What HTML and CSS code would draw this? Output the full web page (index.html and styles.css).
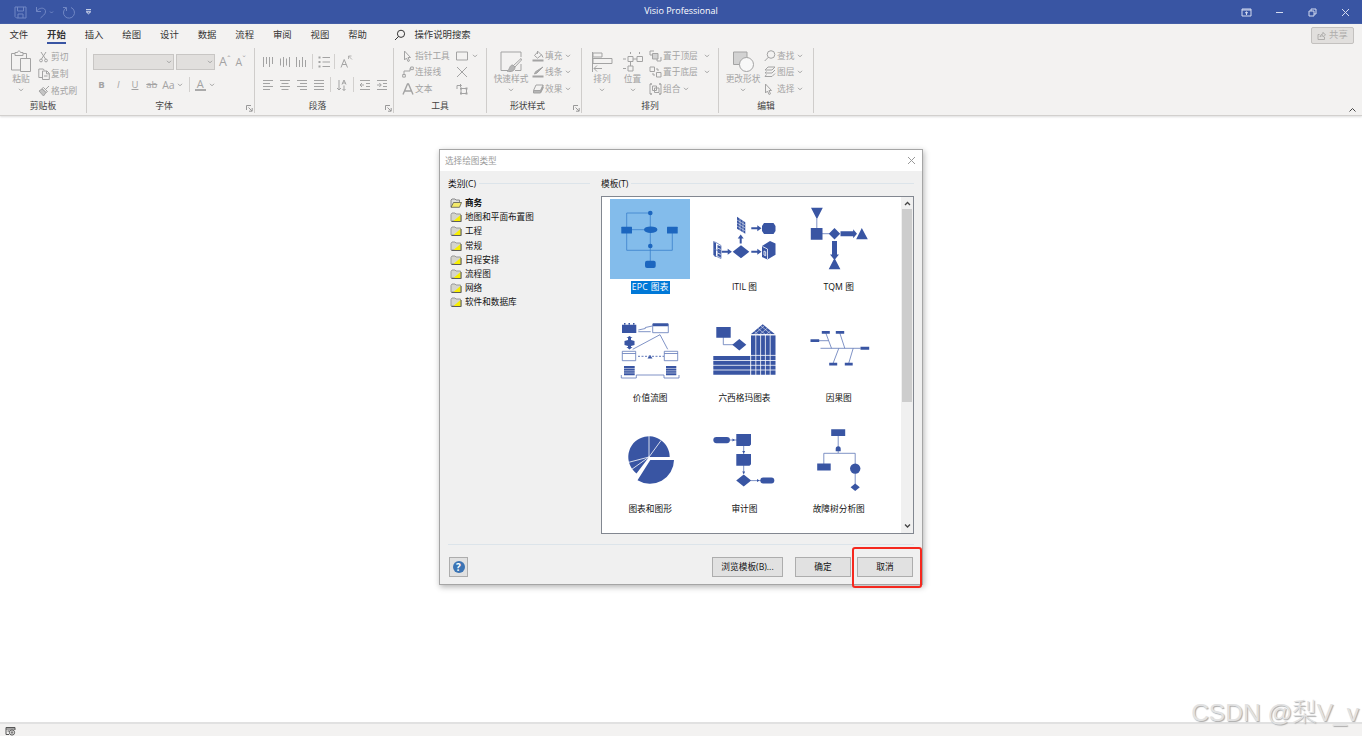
FILE: index.html
```html
<!DOCTYPE html>
<html lang="zh-CN">
<head>
    <meta charset="utf-8">
    <title>Visio Professional</title>
    <link rel="stylesheet" href="styles.css">
</head>

<body>
    <svg class="defs">
        <symbol id="chev" viewBox="0 0 6 4"><path d="M1 .8l2 2 2-2"/></symbol>
        <symbol id="launcher" viewBox="0 0 7 7"><path d="M.5 5V.5H5M2.500 2.500l3.500 3.500M6.200 3v3.200H3"/></symbol>
        <symbol id="folder" viewBox="0 0 12 10">
            <path d="M1 9V2.500l1-1.500h3l1 1h4.500V9z" fill="#d4d4cc" stroke="#999"/>
            <path d="M3.500 9L10.500 3v6z" fill="#f7ee00" stroke="none"/><path d="M1.500 9.500h9.700V3" fill="none" stroke="#444" stroke-width=".8"/>
        </symbol>
    </svg>

    <div class="titlebar">
        <div class="quick">
            <svg width="13" height="13" viewBox="0 0 13 13"><path d="M1 1h11v11H2.500L1 10.500zM3.500 1v4h6V1M4 12V8h5v4"/></svg>
            <svg width="19" height="13" viewBox="0 0 19 13"><path d="M1.500 1v4.500H6M1.500 5.500C4 1 11 1 10.500 6c-.3 2.500-3 4-5 6M15 5.500l1.500 1.500L18 5.500"/></svg>
            <svg width="13" height="13" viewBox="0 0 13 13"><path d="M1 1.500h3.500V5M9 1.500a5.500 5.500 0 1 1-5 .5"/></svg>
            <svg class="bright" width="7" height="6" viewBox="0 0 7 6"><path d="M1 .7h5M1.300 2.800l2.200 2 2.200-2z"/></svg>
        </div>
        <div class="app-name">Visio Professional</div>
        <div class="win-buttons">
            <svg width="11" height="9" viewBox="0 0 11 9"><path d="M1 1h9v7H1zM1 2h9M5.500 7V4M4 5.200l1.500-1.400L7 5.200"/></svg>
            <svg width="9" height="9" viewBox="0 0 9 9"><path d="M1 4.500h7"/></svg>
            <svg width="9" height="9" viewBox="0 0 9 9"><path d="M1 3h5v5H1zM3 3V1h5v5H6"/></svg>
            <svg width="9" height="9" viewBox="0 0 9 9"><path d="M1 1l7 7M8 1L1 8"/></svg>
        </div>
    </div>

    <div class="ribbon">
        <div class="tabs">
            <span>文件</span><span class="active">开始</span><span>插入</span><span>绘图</span><span>设计</span><span>数据</span><span>流程</span><span>审阅</span><span>视图</span><span>帮助</span>
            <svg width="12" height="12" viewBox="0 0 12 12"><circle cx="7" cy="4.800" r="3.600"/><path d="M4.500 7.500L1 11"/></svg>
            <span class="search">操作说明搜索</span>
            <button class="share"><svg width="9" height="9" viewBox="0 0 9 9"><path d="M2.500 3.500H1v5h6.500V6M3 6c.3-2 1.500-3 3-3V1.300L8.500 4 6 6V4.500C5 4.500 4 5 3 6z"/></svg>共享</button>
        </div>

        <div class="groups">
            <!-- 剪贴板 -->
            <div class="group clipboard">
                <div class="tools">
                    <div class="big">
                        <svg width="22" height="23" viewBox="0 0 22 23"><path d="M5 3.500H1.500V20H10M13 3.500h3.500V8M5 2.500h2.500c0-2 3-2 3 0H13v3H5zM10.500 8.500h10v13h-10z"/></svg>
                        粘贴
                        <svg class="chev"><use href="#chev"/></svg>
                    </div>
                    <div class="col">
                        <div><svg width="12" height="12" viewBox="0 0 12 12"><path d="M3 1l4.500 7M8 1L3.500 8"/><circle cx="3" cy="9.500" r="1.400"/><circle cx="8" cy="9.500" r="1.400"/></svg>剪切</div>
                        <div><svg width="12" height="12" viewBox="0 0 12 12"><path d="M4 9.500H.8V1H5l1.500 1M4.500 3H9l2.300 2.300v6.200H4.500zM8.500 3v2.800h2.800M6 8h3.500"/></svg>复制</div>
                        <div><svg width="12" height="12" viewBox="0 0 12 12"><path d="M11 1L7.500 4.500M5.500 2.500l4 4-1.500 1-4-4z"/><path d="M4 4L1 6l4.500 5L8 7.500z" fill="#c4c4c4"/></svg>格式刷</div>
                    </div>
                </div>
                <div class="name">剪贴板</div>
            </div>

            <!-- 字体 -->
            <div class="group font">
                <div class="tools rows">
                    <div class="row">
                        <div class="combo wide"><svg class="chev"><use href="#chev"/></svg></div>
                        <div class="combo"><svg class="chev"><use href="#chev"/></svg></div>
                        <span class="grow">A<small>ˆ</small></span>
                        <span class="shrink">A<small>ˇ</small></span>
                    </div>
                    <div class="row second">
                        <b class="ch">B</b><i class="ch">I</i><u class="ch">U</u><s class="ch">ab</s>
                        <span class="case">Aa</span><svg class="chev"><use href="#chev"/></svg>
                        <span class="sep"></span>
                        <span class="color">A</span><svg class="chev"><use href="#chev"/></svg>
                    </div>
                </div>
                <div class="name more">字体<svg class="launch"><use href="#launcher"/></svg></div>
            </div>

            <!-- 段落 -->
            <div class="group para">
                <div class="tools rows">
                    <div class="row">
                        <svg width="12" height="12" viewBox="0 0 12 12"><path d="M1.500 1v10M4.500 1v7M7.500 1v10M10.500 1v7"/></svg>
                        <svg width="12" height="12" viewBox="0 0 12 12"><path d="M1.500 2.500v7M4.500 1v10M7.500 2.500v7M10.500 1v10"/></svg>
                        <svg width="12" height="12" viewBox="0 0 12 12"><path d="M1.500 1v10M4.500 4v7M7.500 1v10M10.500 4v7"/></svg>
                        <span class="sep"></span>
                        <svg width="12" height="12" viewBox="0 0 12 12"><path d="M4.500 1.500H12M4.500 6H12M4.500 10.500H12"/><path d="M.5 1.500h2M.5 6h2M.5 10.500h2" stroke-width="2"/></svg>
                        <span class="sep"></span>
                        <svg width="13" height="13" viewBox="0 0 13 13"><path d="M1 12.500L4.200 4.500 7.500 12.500M2.200 9.500h4"/><path d="M8.500 4V1h3M8.500 1l3.500 3.500" stroke-width=".8"/></svg>
                    </div>
                    <div class="row second">
                        <svg width="12" height="12" viewBox="0 0 12 12"><path d="M1 1.500h10M1 4.500h7M1 7.500h10M1 10.500h7"/></svg>
                        <svg width="12" height="12" viewBox="0 0 12 12"><path d="M1 1.500h10M2.500 4.500h7M1 7.500h10M2.500 10.500h7"/></svg>
                        <svg width="12" height="12" viewBox="0 0 12 12"><path d="M1 1.500h10M4 4.500h7M1 7.500h10M4 10.500h7"/></svg>
                        <svg width="12" height="12" viewBox="0 0 12 12"><path d="M1 1.500h10M1 4.500h10M1 7.500h10M1 10.500h10"/></svg>
                        <span class="sep"></span>
                        <svg width="12" height="12" viewBox="0 0 12 12"><path d="M3 1v10M1 9l2 2 2-2M8 6.500v5M6.500 10L8 11.500 9.500 10M6 5.500L8 1l2 4.500M6.700 4h2.600"/></svg>
                        <span class="sep"></span>
                        <svg width="12" height="12" viewBox="0 0 12 12"><path d="M1 1.500h10M7 4.500h4M7 7.500h4M1 10.500h10M1 6h4M3 4L1 6l2 2"/></svg>
                        <svg width="12" height="12" viewBox="0 0 12 12"><path d="M1 1.500h10M7 4.500h4M7 7.500h4M1 10.500h10M1 6h4M3.300 4l2 2-2 2"/></svg>
                    </div>
                </div>
                <div class="name more">段落<svg class="launch"><use href="#launcher"/></svg></div>
            </div>

            <!-- 工具 -->
            <div class="group tool">
                <div class="tools">
                    <div class="col">
                        <div><svg width="12" height="12" viewBox="0 0 12 12"><path d="M2.500 1v9l2-2 1.500 3.500 1.500-.7L6 7.500h2.500z"/></svg>指针工具</div>
                        <div><svg width="12" height="12" viewBox="0 0 12 12"><path d="M.7 8.500h2.600v2.600H.7zM8.700 1h2.600v2.600H8.700zM2 8.500V5h6V2.300h.7"/></svg>连接线</div>
                        <div><svg width="12" height="12" viewBox="0 0 12 12"><path d="M1 11.500L5.500 1h1L11 11.500M2.800 8h6.400" stroke-width="1.400"/></svg>文本</div>
                    </div>
                    <div class="col second">
                        <div><svg width="12" height="12" viewBox="0 0 12 12"><path d="M.5 2h11v8H.5z"/></svg><svg class="chev"><use href="#chev"/></svg></div>
                        <div><svg width="12" height="12" viewBox="0 0 12 12"><path d="M1 1l10 10M11 1L1 11"/></svg></div>
                        <div><svg width="12" height="12" viewBox="0 0 12 12"><path d="M1 6V2.500h4M4 1l1.500 1.500L4 4M5 5.500h5.500v5H5z"/><path d="M4 5.500h2M9.500 5.500h2M4 10.500h2M9.500 10.500h2" stroke-width="2"/></svg></div>
                    </div>
                </div>
                <div class="name">工具</div>
            </div>

            <!-- 形状样式 -->
            <div class="group style">
                <div class="tools">
                    <div class="big">
                        <svg width="22" height="23" viewBox="0 0 22 23"><path d="M8 20.500H1V2h20v5M21 14v6.500h-6M21 8.500L13 16l1.500 1.500L21.500 10z"/><path d="M13 15c-4 0-3 5-6 6 4 1.500 8 0 8-4z" fill="#b5b5b5"/></svg>
                        快速样式
                        <svg class="chev"><use href="#chev"/></svg>
                    </div>
                    <div class="col">
                        <div><svg width="12" height="12" viewBox="0 0 12 12"><path d="M6 1.500L2.500 5.500l3 2.700L9.500 5zM5.500 1v3M9.500 4.500l1.500 3"/><path d="M.5 10.500h11" stroke-width="2"/></svg>填充<svg class="chev"><use href="#chev"/></svg></div>
                        <div><svg width="12" height="12" viewBox="0 0 12 12"><path d="M11 1L5 7 2.500 8l1-2.300z" fill="#aaa"/><path d="M.5 10.500h11" stroke-width="2"/></svg>线条<svg class="chev"><use href="#chev"/></svg></div>
                        <div><svg width="12" height="12" viewBox="0 0 12 12"><path d="M4 2h7L8.500 7.500h-7zM1.500 7.500v2.500h7l2.500-5V2"/><path d="M1.500 9h7L11 4" stroke-width="1.600"/></svg>效果<svg class="chev"><use href="#chev"/></svg></div>
                    </div>
                </div>
                <div class="name more">形状样式<svg class="launch"><use href="#launcher"/></svg></div>
            </div>

            <!-- 排列 -->
            <div class="group arrange">
                <div class="tools">
                    <div class="big">
                        <svg width="22" height="23" viewBox="0 0 22 23"><path d="M1.500 2v20M2 3h9v4H2zM2 8.500h19v5H2zM3 18.500h8M6 15.500l-3 3 3 3"/></svg>
                        排列
                        <svg class="chev"><use href="#chev"/></svg>
                    </div>
                    <div class="big">
                        <svg width="22" height="23" viewBox="0 0 22 23"><path d="M6 6.500h5v5H6zM15 6.500h5.500v5H15zM6 16h5v5H6zM11 9h4M8.500 11.500V16M8.500 2v2M17.500 2v2M1 9h3M1 18.500h3"/></svg>
                        位置
                        <svg class="chev"><use href="#chev"/></svg>
                    </div>
                    <div class="col">
                        <div><svg width="13" height="12" viewBox="0 0 13 12"><path d="M5 1H1v4h2M12 7v4H8V9"/><path d="M3.500 3.500h5.500v5.500H3.500z" fill="#d2d2d2"/></svg>置于顶层<svg class="chev far"><use href="#chev"/></svg></div>
                        <div><svg width="13" height="12" viewBox="0 0 13 12"><path d="M1 1h4.500v4.500H1zM7.500 6.500H12V11H7.500zM7 3h2v2M4 7v2h2"/></svg>置于底层<svg class="chev far"><use href="#chev"/></svg></div>
                        <div><svg width="13" height="12" viewBox="0 0 13 12"><path d="M3.500 3h4v4.500h-4zM5.500 5h4.500v4.500H5.500zM1 1v10M12 1v10" /><path d="M1 1h2M10 1h2M1 11h2M10 11h2" stroke-width="1.500"/></svg>组合<svg class="chev"><use href="#chev"/></svg></div>
                    </div>
                </div>
                <div class="name">排列</div>
            </div>

            <!-- 编辑 -->
            <div class="group edit">
                <div class="tools">
                    <div class="big">
                        <svg width="22" height="23" viewBox="0 0 22 23"><path d="M1.500 2H15v12.500H1.500z" fill="#d2d2d2"/><circle cx="14.500" cy="14.500" r="7" fill="#f8f8f8"/></svg>
                        更改形状
                        <svg class="chev"><use href="#chev"/></svg>
                    </div>
                    <div class="col">
                        <div><svg width="12" height="12" viewBox="0 0 12 12"><circle cx="7" cy="4.500" r="3.800"/><path d="M4.300 7.300L.7 11"/></svg>查找<svg class="chev"><use href="#chev"/></svg></div>
                        <div><svg width="12" height="12" viewBox="0 0 12 12"><path d="M4 1h7L8 4H1zM2.500 5.500L1 7h7l3-3M2.500 8.500L1 10.500h7l3-3"/></svg>图层<svg class="chev"><use href="#chev"/></svg></div>
                        <div><svg width="12" height="12" viewBox="0 0 12 12"><path d="M1.500 1v9l2-2L5 11.500l1.500-.7L5 7.500h2.500z"/></svg>选择<svg class="chev"><use href="#chev"/></svg></div>
                    </div>
                </div>
                <div class="name">编辑</div>
            </div>

            <svg class="collapse" width="9" height="6" viewBox="0 0 9 6"><path d="M1.500 4.500l3-3 3 3"/></svg>
        </div>
    </div>

    <div class="workspace">
        <div class="dialog">
            <div class="dialog-title">选择绘图类型
                <svg width="9" height="9" viewBox="0 0 9 9"><path d="M1 1l7 7M8 1L1 8"/></svg>
            </div>
            <div class="dialog-main">
                <div class="categories">
                    <div class="legend">类别(C)</div>
                    <ul>
                        <li class="open"><svg width="12" height="10" viewBox="0 0 12 10"><path d="M1 9V2l1-1h3l1 1h3.500v2" fill="#ddd" stroke="#888"/><path d="M1 9.300L3.500 4.500H11.500L9.500 9.300z" fill="#f3e96b" stroke="#444" stroke-width=".7"/></svg>商务</li>
                        <li><svg width="12" height="10"><use href="#folder"/></svg>地图和平面布置图</li>
                        <li><svg width="12" height="10"><use href="#folder"/></svg>工程</li>
                        <li><svg width="12" height="10"><use href="#folder"/></svg>常规</li>
                        <li><svg width="12" height="10"><use href="#folder"/></svg>日程安排</li>
                        <li><svg width="12" height="10"><use href="#folder"/></svg>流程图</li>
                        <li><svg width="12" height="10"><use href="#folder"/></svg>网络</li>
                        <li><svg width="12" height="10"><use href="#folder"/></svg>软件和数据库</li>
                    </ul>
                </div>
                <div class="templates">
                    <div class="legend">模板(T)</div>
                    <div class="listbox">
                        <div class="tiles">
                            <div class="tile selected">
                                <svg viewBox="0 0 80 80">
                                    <path class="ln" d="M40.300 14H16.700v37.300h45.600V34M40.300 14v48M20 30.700h16"/>
                                    <circle cx="40.300" cy="14" r="2.300"/><circle cx="40.300" cy="47" r="2.300"/><ellipse cx="40.700" cy="30.700" rx="6.700" ry="3.300"/>
                                    <rect x="11.300" y="27.700" width="10.700" height="6.800" rx=".5"/><rect x="57" y="27.700" width="10.700" height="6.800" rx=".5"/><rect x="35" y="61.700" width="10.700" height="7.300" rx="2"/>
                                </svg>
                                <span>EPC 图表</span>
                            </div>
                            <div class="tile">
                                <svg viewBox="0 0 80 80">
                                    <path d="M33 17.700l8.300 5.600v11.500L33 29.700zM47.300 28.300h6v-2l4.200 3-4.200 3v-2h-6zM60 24h9.500l2 3v5l-2 3H60l-2-3v-5zM35.700 44.500v-5h-2l3-4 3 4h-2v5zM37 46.300l8.300 6.500L37 59.300l-8.300-6.500zM17.700 51.800h6v-2l4.200 3-4.200 3v-2h-6zM47.300 51.800h6v-2l4.200 3-4.200 3v-2h-6z"/>
                                    <path d="M58 47l8-5 5.500 2.500v11.200L63.500 60.500 58 58zM10 43l2 1v14l-2-1zM13.500 46l3.500 1.500v11L13.500 57z"/>
                                    <path class="gap thin" d="M33 21l8.300 5M33 24l8.300 5M33 27l8.300 5M36 19v14M39 20v14"/>
                                    <path class="gap" d="M58.500 47.500l5 2.500v10M60 52v4l1.700.8v-4zM13.500 49l3.500 1.500M13.500 54l3.500 1.500"/>
                                    <path class="ln" d="M9.500 42.500l2.500 1 5 3v13l-7.500-3.500zM10 50l7 3"/>
                                </svg>
                                <span>ITIL 图</span>
                            </div>
                            <div class="tile">
                                <svg viewBox="0 0 80 80">
                                    <path class="ln" d="M17.800 20v10M23 34.700h8"/>
                                    <path d="M12 8.700h11.800l-5.900 11.600zM11.800 29h11.700v11.700H11.800zM35.500 29l5.700 5.700-5.700 5.700-5.700-5.700zM41.500 32.200h12.700v-2l3.800 4.500-3.800 4.500v-2H41.500zM62.800 29l6 11.200H57.200zM33 42h5v13.500h2L35.500 61 31 55.500h2zM35.500 59l5.900 11.300H29.700z"/>
                                </svg>
                                <span>TQM 图</span>
                            </div>
                            <div class="tile">
                                <svg viewBox="0 0 80 80">
                                    <path d="M12 14.700h14.300V23H12zM14 13h1.500v1.500H14zM18.500 13H20v1.500h-1.500zM23 13h1.500v1.500H23zM42.700 13.300h15.600v3H42.700zM14.500 31l3.500-1v-2h-1.500l3-2 3 2H21v2l3.500 1v4L21 36v1h1.500l-3 2.500-3-2.500H18v-1l-3.500-1zM40 44.700l2.500 3.800h-5zM14 56h10.700v9.300H14zM56 56h10.300v9.300H56z"/>
                                    <path class="ln" d="M42.700 14v8.700h15.600V14M28.300 20l7-1.500v-1l7-1.500M28.300 21.700h12.400M22.700 39.300L50 24.700l7.700 14.600M12.300 41.300h13.400v9.400H12.300zM12.300 43.500h13.400M54.300 41.300h13.400v9.400H54.300zM54.300 43.500h13.400M11.300 65v3h15v-3H54v3h15v-3"/>
                                    <path class="ln dash" d="M28 46.300h26"/>
                                    <path class="gap thin" d="M14 58.500h11M14 60.800h11M14 63h11M56 58.500h11M56 60.800h11M56 63h11"/>
                                </svg>
                                <span>价值流图</span>
                            </div>
                            <div class="tile">
                                <svg viewBox="0 0 80 80">
                                    <path class="ln" d="M19.300 27v7.700H30"/>
                                    <path d="M12.300 17h14.400v10.700H12.300zM35.300 29l7 5.700-7 5.700-7-5.700zM58.700 14.300l12.300 10H46.700zM47 25.300h24.500v39.400H47zM9.300 46h37.400v18.700H9.300z"/>
                                    <path class="gap" d="M51.800 25v40M56.600 25v40M61.400 25v40M66.200 25v40M47 45.400h25M9 50.500h63M9 55.300h63M9 60h63M46.700 45v20M47 24.800h25"/>
                                    <path class="gap thin" d="M50.500 21.500l5 4M54 18.500l8 6.500M57 16l11 9M66.500 21l-5 4M63.500 18l-8.500 7M60 16l-10.500 9"/>
                                </svg>
                                <span>六西格玛图表</span>
                            </div>
                            <div class="tile">
                                <svg viewBox="0 0 80 80">
                                    <path class="ln" d="M21.500 38.300h40M20 30.700h9.500M26.800 23l5.700 15.300M40.800 23l5 15.300M39.800 38.300L34.200 53M54.200 38.300L49.800 53"/>
                                    <path d="M61.500 36.800h8.700v3h-8.700zM22.800 21h8v2.700h-8zM36.800 21h8.400v2.700h-8.400zM11.500 29.200h8.700V32h-8.700zM30.200 52.700h8v2.700h-8zM45.800 52.700h7.900v2.700h-7.900z"/>
                                </svg>
                                <span>因果图</span>
                            </div>
                            <div class="tile">
                                <svg viewBox="0 0 80 80">
                                    <path d="M39 37h20.700A20.700 20.700 0 1 0 26.500 53.500zM40.300 40H64A24 24 0 0 1 27.500 60.300z"/>
                                    <path class="gap" d="M39 37V16M39 37l12-16.500M39 37l-21 5.500M39 37L21.500 49.500"/>
                                </svg>
                                <span>图表和图形</span>
                            </div>
                            <div class="tile">
                                <svg viewBox="0 0 80 80">
                                    <path class="ln" d="M26 20h7M39.700 26v28M47 60.600h10"/>
                                    <rect x="9.300" y="17" width="16.700" height="6.200" rx="3.100"/><rect x="56.300" y="57.600" width="14" height="5.800" rx="2.900"/>
                                    <path d="M32.300 14H47v10.500L45.500 26H32.300zM32.300 34H47v10.300l-1.500 1.500H32.300zM39.700 54.500l7.500 6-7.500 6-7.500-6zM28.500 18.500l2.500 1.500-2.500 1.500zM38.200 31h3l-1.500 2.500zM38.200 51.500h3L39.700 54zM53 59l2.500 1.600L53 62z"/>
                                </svg>
                                <span>审计图</span>
                            </div>
                            <div class="tile">
                                <svg viewBox="0 0 80 80">
                                    <path class="ln" d="M39.200 15v18M24.800 44V33.300h31.400V65"/>
                                    <path d="M32.200 9.300h14V16h-14zM36.700 31.300v-2.500a2.500 2.500 0 0 1 5 0v2.500zM18.200 43.600h13.500v7H18.200zM56.200 63.600l4.600 3.700-4.600 3.700-4.600-3.700z"/>
                                    <circle cx="56.200" cy="48.600" r="5.200"/>
                                </svg>
                                <span>故障树分析图</span>
                            </div>
                        </div>
                        <div class="scrollbar">
                            <svg width="9" height="6" viewBox="0 0 9 6"><path d="M2 4l2.500-2.500L7 4"/></svg>
                            <div class="thumb"></div>
                            <svg width="9" height="6" viewBox="0 0 9 6"><path d="M2 1.500L4.500 4 7 1.500"/></svg>
                        </div>
                    </div>
                </div>
            </div>
            <div class="dialog-footer">
                <button class="help"><i>?</i></button>
                <button class="browse">浏览模板(B)...</button>
                <button class="ok">确定</button>
                <button class="cancel">取消<span class="highlight"></span></button>
            </div>
        </div>
    </div>

    <div class="statusbar">
        <svg width="11" height="10" viewBox="0 0 11 10"><path d="M1 8.500v-7h9V4M1 3h9M1 8.500h3M2.500 5h2"/><circle cx="7" cy="6.500" r="2.600"/><circle cx="7" cy="6.500" r=".8"/></svg>
    </div>
    <div class="watermark">CSDN @梨V_v</div>
</body>
</html>
```

FILE: styles.css
```css
* {
    box-sizing: border-box;
}

body {
    margin: 0;
    width: 1362px;
    height: 736px;
    overflow: hidden;
    display: flex;
    flex-direction: column;
    background: #fff;
    font-family: "Open Sans", "Noto Sans CJK SC", sans-serif;
    font-size: 8.7px;
    line-height: 12px;
    color: #222;
}

svg {
    fill: none;
    stroke: currentColor;
    flex: none;
}

.defs {
    position: absolute;
    width: 0;
    height: 0;
}

button {
    font: inherit;
    color: inherit;
    padding: 0;
}

/* title bar */
.titlebar {
    height: 24px;
    background: #3955a3;
    color: #fff;
    display: grid;
    grid-template-columns: 1fr auto 1fr;
    align-items: center;
}

.quick {
    display: flex;
    align-items: center;
    padding-left: 14px;
    gap: 8px;
    color: #7187c4;
}

.quick .bright {
    color: #e4e9f6;
    margin-left: 2px;
}

.app-name {
    font-size: 9px;
    padding-bottom: 3px;
}

.win-buttons {
    display: flex;
    justify-content: flex-end;
    gap: 24px;
    padding-right: 12px;
    color: #d5dcf0;
}

.win-buttons svg:first-child {
    margin-right: -1px;
}

/* ribbon */
.ribbon {
    height: 92px;
    background: #f3f2f1;
    border-bottom: 1px solid #d2d0ce;
    box-shadow: 0 1px 2px #ddd;
}

.tabs {
    height: 22px;
    display: flex;
    align-items: center;
    font-size: 9.4px;
    color: #333;
}

.tabs > span {
    width: 37.65px;
    height: 20px;
    line-height: 19px;
    text-align: center;
}

.tabs .active {
    font-weight: bold;
    display: flex;
    flex-direction: column;
    align-items: center;
}

.tabs .active::after {
    content: "";
    width: 19px;
    height: 2px;
    flex: none;
    margin-top: -2px;
    background: #3955a3;
}

.tabs > svg {
    margin-left: 18px;
    margin-right: 8px;
}

.tabs .search {
    width: 60px;
    text-align: left;
}

.share {
    margin-left: auto;
    margin-right: 8px;
    width: 43px;
    height: 17px;
    display: flex;
    align-items: center;
    justify-content: center;
    gap: 3px;
    background: #e1dfdd;
    border: 1px solid #c3c1bf;
    border-radius: 2px;
    color: #b0aeac;
}

.groups {
    display: flex;
    height: 69px;
    color: #a3a3a3;
}

.group {
    height: 65px;
    margin-top: 2px;
    border-right: 1px solid #cfcdcb;
    display: flex;
    flex-direction: column;
}

.tools {
    height: 53px;
    display: flex;
}

.name {
    position: relative;
    text-align: center;
    color: #444;
    font-size: 8.8px;
    line-height: 13px;
}

.more {
    padding-right: 13px;
}

.launch {
    position: absolute;
    right: 1px;
    top: 5px;
    width: 7px;
    height: 7px;
    color: #999;
}

.chev {
    width: 6px;
    height: 4px;
}

.big {
    width: 36px;
    display: flex;
    flex-direction: column;
    align-items: center;
    padding-top: 2px;
    white-space: nowrap;
}

.big .chev {
    margin-top: 3px;
}

.col {
    display: flex;
    flex-direction: column;
}

.col > div {
    height: 16.3px;
    display: flex;
    align-items: center;
    white-space: nowrap;
}

.col svg:first-child {
    margin-right: 1px;
}

.col .chev {
    margin-left: 3px;
}

.clipboard {
    width: 87px;
}

.clipboard .big {
    margin-left: 3px;
    margin-right: -1px;
}

.clipboard .col > div {
    height: 17px;
}

.rows {
    flex-direction: column;
}

.row {
    display: flex;
    align-items: center;
    height: 17px;
    margin-top: 5px;
}

.sep {
    width: 1px;
    height: 15px;
    background: #d2d0ce;
}

.font {
    width: 168px;
}

.font .row {
    padding-left: 6px;
}

.combo {
    width: 39px;
    height: 16px;
    margin-left: 2px;
    background: #e1dfdd;
    border: 1px solid #c8c6c4;
    display: flex;
    align-items: center;
    justify-content: flex-end;
    padding-right: 1px;
}

.combo.wide {
    width: 81px;
    margin-left: 0;
}

.grow,
.shrink {
    display: flex;
    font-size: 12.5px;
    margin-left: 4px;
}

.shrink {
    font-size: 10.5px;
    margin-left: 5px;
}

.grow small,
.shrink small {
    font-size: 9px;
    line-height: 8px;
}

.font .second,
.para .second {
    margin-top: 6px;
}

.ch {
    width: 16.8px;
    text-align: center;
    font-size: 9.5px;
}

.case {
    margin-left: 2px;
    margin-right: 2px;
    font-size: 10.5px;
}

.font .sep {
    margin: 0 5px 0 6px;
}

.color {
    width: 11px;
    height: 13px;
    margin-right: 3px;
    border-bottom: 2px solid #aaa;
    text-align: center;
    font-size: 11px;
    line-height: 11px;
}

.para {
    width: 139px;
}

.para .row {
    gap: 5px;
    padding-left: 7px;
}

.para .row:first-child {
    gap: 4.700px;
}

.tool {
    width: 93px;
}

.tool .col {
    width: 55px;
    padding-left: 8px;
}

.tool .second {
    padding-left: 7px;
    width: 35px;
}

.style {
    width: 95px;
}

.style .big {
    margin-left: 6px;
    margin-right: 3px;
}

.arrange {
    width: 137px;
}

.arrange .big {
    width: 30px;
    margin-left: 5px;
    margin-right: -4.5px;
}

.arrange .col {
    padding-left: 6px;
}

.arrange .far {
    margin-left: 6px;
}

.edit {
    width: 95px;
}

.edit .big {
    margin-left: 6px;
    margin-right: 3px;
}

.collapse {
    margin-left: auto;
    margin-right: 5px;
    align-self: flex-end;
    margin-bottom: 2px;
    color: #444;
}

/* drawing area with the template dialog */
.workspace {
    flex: 1;
    padding: 33px 0 0 439px;
}

.dialog {
    width: 484px;
    height: 436px;
    background: #f0f0f0;
    border: 1px solid #a5a5a5;
    box-shadow: 1px 2px 6px rgba(0, 0, 0, .3);
    color: #111;
}

.dialog-title {
    height: 21px;
    padding: 0 6px 0 5px;
    background: #fff;
    color: #999;
    font-size: 8.6px;
    display: flex;
    align-items: center;
    justify-content: space-between;
}

.dialog-main {
    height: 374px;
    margin: 0 8px;
    border-bottom: 1px solid #dce4ea;
    display: flex;
    justify-content: space-between;
}

.legend {
    display: flex;
    align-items: center;
    height: 25px;
    gap: 3px;
}

.legend::after {
    content: "";
    flex: 1;
    height: 1px;
    background: #dce4ea;
}

.categories {
    width: 142px;
}

.categories ul {
    list-style: none;
    margin: 0;
    padding: 0 0 0 2px;
}

.categories li {
    height: 14.2px;
    display: flex;
    align-items: center;
    gap: 3px;
    font-size: 8.6px;
}

.categories .open {
    font-weight: bold;
}

.templates {
    width: 313px;
}

.listbox {
    height: 338px;
    background: #fff;
    border: 1px solid #828790;
    display: flex;
    justify-content: space-between;
}

.tiles {
    display: grid;
    grid-template-columns: repeat(3, 94.3px);
    grid-auto-rows: 110.7px;
    padding: 2px 0 0 1px;
}

.tile {
    display: flex;
    flex-direction: column;
    align-items: center;
}

.tile svg {
    width: 80px;
    height: 80px;
    fill: #3955a3;
    stroke: none;
    margin-bottom: 2.4px;
}

.tile .ln {
    fill: none;
    stroke: #5f77b8;
    stroke-width: .8;
}

.tile .gap {
    fill: none;
    stroke: #fff;
    stroke-width: .8;
}

.tile .thin {
    stroke-width: .5;
}

.tile .dash {
    stroke-dasharray: 2 1.5;
    stroke-width: 1;
}

.tile span {
    padding: 0 1px;
    height: 13px;
    line-height: 13px;
}

.selected svg {
    background: #83bceb;
    fill: #1c66bf;
}

.selected .ln {
    stroke: #3a80cc;
}

.selected span {
    background: #0078d7;
    color: #fff;
    letter-spacing: .3px;
}

.scrollbar {
    width: 12px;
    background: #f0f0f0;
    display: flex;
    flex-direction: column;
    align-items: center;
    padding: 4px 0;
    color: #444;
}

.scrollbar svg {
    stroke-width: 1.3;
}

.thumb {
    width: 10px;
    height: 193px;
    margin: 2px 0 auto;
    background: #cdcdcd;
}

.dialog-footer {
    display: flex;
    padding: 12px 9px 0;
}

.dialog-footer button {
    height: 20px;
    width: 56px;
    background: #e1e1e1;
    border: 1px solid #adadad;
}

.dialog-footer .help {
    width: 19px;
    margin-right: auto;
    display: flex;
    align-items: center;
    justify-content: center;
}

.help i {
    width: 12px;
    height: 12px;
    border-radius: 50%;
    background: #3c74b4;
    color: #fff;
    font-style: normal;
    font-weight: bold;
    font-size: 10px;
    line-height: 12px;
}

.dialog-footer .browse {
    width: 71px;
    margin-right: 12px;
}

.dialog-footer .ok {
    margin-right: 6px;
}

.cancel {
    position: relative;
}

.highlight {
    position: absolute;
    left: -6px;
    top: -11px;
    width: 70px;
    height: 41px;
    border: 2px solid #f5281e;
    border-radius: 3px;
}

/* status bar */
.statusbar {
    height: 14px;
    background: #f3f2f1;
    border-top: 2px solid #e1e1e1;
    padding: 2px 5px;
    color: #555;
    display: flex;
}

.watermark {
    position: absolute;
    right: 3px;
    bottom: 7px;
    font: 300 24.5px/32px "Liberation Sans", "Noto Sans CJK SC", sans-serif;
    color: #e2e2e2;
    text-shadow: 1px 1px 1px #aaa;
    white-space: nowrap;
}
```
